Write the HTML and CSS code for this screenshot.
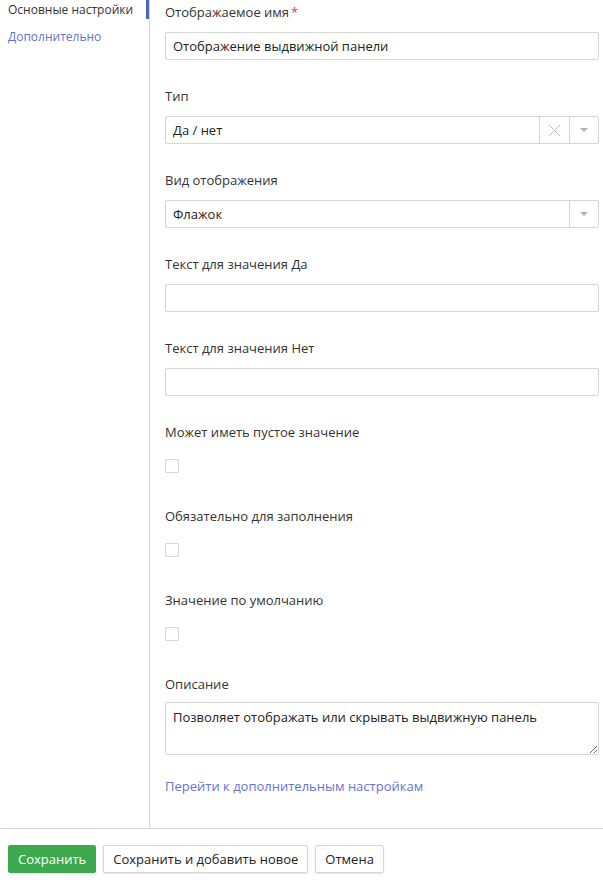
FILE: index.html
```html
<!DOCTYPE html>
<html lang="ru">
<head>
    <meta charset="UTF-8">
    <meta name="viewport" content="width=device-width, initial-scale=1.0">
    <title>Настройки поля</title>
    <link rel="stylesheet" href="styles.css">
</head>
<body>

    <div class="page">
        <div class="nav">
            <a class="nav-item active" href="#">Основные настройки</a>
            <a class="nav-item" href="#">Дополнительно</a>
        </div>

        <div class="content">
            <div class="field">
                <label>Отображаемое имя<span class="req">*</span></label>
                <input type="text" class="input" value="Отображение выдвижной панели">
            </div>

            <div class="field">
                <label>Тип</label>
                <div class="select">
                    <span class="select-value">Да / нет</span>
                    <span class="select-btn clear">
                        <svg width="13" height="13" viewBox="0 0 13 13"><path d="M1 1L12 12M12 1L1 12" stroke="#bdbdbd" stroke-width="1" fill="none"/></svg>
                    </span>
                    <span class="select-btn"><i class="caret"></i></span>
                </div>
            </div>

            <div class="field">
                <label>Вид отображения</label>
                <div class="select">
                    <span class="select-value">Флажок</span>
                    <span class="select-btn"><i class="caret"></i></span>
                </div>
            </div>

            <div class="field">
                <label>Текст для значения Да</label>
                <input type="text" class="input">
            </div>

            <div class="field">
                <label>Текст для значения Нет</label>
                <input type="text" class="input">
            </div>

            <div class="field">
                <label>Может иметь пустое значение</label>
                <div class="check-row"><span class="checkbox"></span></div>
            </div>

            <div class="field">
                <label>Обязательно для заполнения</label>
                <div class="check-row"><span class="checkbox"></span></div>
            </div>

            <div class="field">
                <label>Значение по умолчанию</label>
                <div class="check-row"><span class="checkbox"></span></div>
            </div>

            <div class="field field-text">
                <label>Описание</label>
                <textarea class="textarea">Позволяет отображать или скрывать выдвижную панель</textarea>
            </div>

            <a class="more-link" href="#">Перейти к дополнительным настройкам</a>
        </div>
    </div>

    <div class="footer">
        <button class="btn btn-green">Сохранить</button>
        <button class="btn">Сохранить и добавить новое</button>
        <button class="btn">Отмена</button>
    </div>

</body>
</html>
```

FILE: styles.css
```css
body {
    margin: 0;
    font-family: "Open Sans", Arial, sans-serif;
    font-size: 13px;
    color: #333;
    background: white;
}
.page {
    display: flex;
    height: 829px;
    border-bottom: 1px solid #d4d4d4;
    box-sizing: border-box;
}
.nav {
    width: 150px;
    flex-shrink: 0;
    border-right: 1px solid #d4d4d4;
    box-sizing: border-box;
}
.nav-item {
    display: block;
    height: 19px;
    line-height: 19px;
    padding: 0 8px;
    margin-bottom: 8px;
    color: #5a74d0;
    text-decoration: none;
    font-size: 12px;
}
.nav-item.active {
    color: #333;
    border-right: 3px solid #4a67c6;
}
.content {
    flex: 1;
    padding: 3px 4px 0 15px;
}
.field {
    margin-bottom: 27px;
}
.field label {
    display: block;
    line-height: 18px;
    margin-bottom: 11px;
}
.field-text label {
    margin-bottom: 9px;
}
.req {
    color: #e53935;
    margin-left: 2px;
}
.input {
    display: block;
    width: 100%;
    height: 28px;
    box-sizing: border-box;
    border: 1px solid #d6d6d6;
    border-radius: 2px;
    padding: 0 7px;
    font-family: inherit;
    font-size: 13px;
    color: #222;
}
.select {
    display: flex;
    height: 28px;
    box-sizing: border-box;
    border: 1px solid #d6d6d6;
    border-radius: 2px;
}
.select-value {
    flex: 1;
    padding: 0 7px;
    line-height: 26px;
    color: #222;
}
.select-btn {
    width: 28px;
    border-left: 1px solid #d6d6d6;
    display: flex;
    align-items: center;
    justify-content: center;
}
.select-btn.clear {
    width: 29px;
}
.caret {
    width: 0;
    height: 0;
    border-left: 4px solid transparent;
    border-right: 4px solid transparent;
    border-top: 4px solid #b0b0b0;
}
.check-row {
    height: 28px;
    display: flex;
    align-items: center;
}
.checkbox {
    width: 12px;
    height: 12px;
    border: 1px solid #d8d8d8;
    border-radius: 1px;
}
.textarea {
    display: block;
    width: 100%;
    height: 53px;
    box-sizing: border-box;
    border: 1px solid #d6d6d6;
    border-radius: 2px;
    padding: 5px 7px;
    font-family: inherit;
    font-size: 13px;
    color: #222;
    resize: vertical;
}
.more-link {
    display: block;
    margin-top: -5px;
    line-height: 18px;
    color: #6a72d2;
    text-decoration: none;
}
.footer {
    display: flex;
    gap: 7px;
    padding: 16px 8px;
}
.btn {
    height: 28px;
    padding: 0 9px;
    border: 1px solid #d6d6d6;
    border-radius: 2px;
    background: white;
    box-shadow: 0 1px 2px rgba(0, 0, 0, 0.1);
    font-family: inherit;
    font-size: 13px;
    color: #222;
}
.btn-green {
    background: #3ea94f;
    border-color: #3ea94f;
    color: white;
}
```
